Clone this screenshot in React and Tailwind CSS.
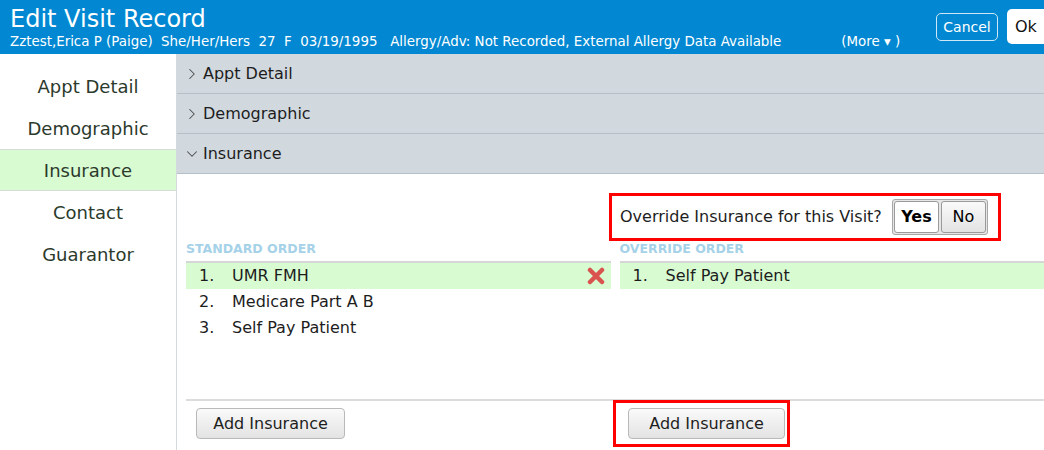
import React, { useState } from 'react';
import { ChevronRight, ChevronDown } from 'lucide-react';

const NAV = ['Appt Detail', 'Demographic', 'Insurance', 'Contact', 'Guarantor'];

const STANDARD = ['UMR FMH', 'Medicare Part A B', 'Self Pay Patient'];
const OVERRIDE = ['Self Pay Patient'];

const RemoveIcon = () => (
  <svg width="18" height="18" viewBox="0 0 18 18">
    <path d="M3 3 L15 15 M15 3 L3 15" stroke="#d9534f" strokeWidth="4.5" strokeLinecap="round" />
  </svg>
);

const SectionHeader = ({ title, open }) => (
  <div className="h-10 flex items-center gap-[2px] pl-[6px] bg-[#d1d9df] border-b border-[#b6c0c8] text-[16px] text-[#1d1d1d]">
    {open
      ? <ChevronDown size={18} color="#4a4a4a" strokeWidth={1.4} />
      : <ChevronRight size={18} color="#4a4a4a" strokeWidth={1.4} />}
    <span>{title}</span>
  </div>
);

const OrderList = ({ label, items, removable }) => (
  <div className="flex-1">
    <div className="text-[12.5px] font-bold text-[#a5d2e8] h-[14px] leading-[14px] mb-[5px]">{label}</div>
    <div className="border-t-2 border-[#d6d6d6]">
      {items.map((name, i) => (
        <div key={name}
          className={`h-[26px] flex items-center text-[16px] text-[#1d1d1d] ${i === 0 ? 'bg-[#d9fbd2]' : ''}`}>
          <span className="w-[46px] pl-[13px]">{i + 1}.</span>
          <span className="flex-1">{name}</span>
          {removable && i === 0 && <span className="mr-[6px] flex"><RemoveIcon /></span>}
        </div>
      ))}
    </div>
  </div>
);

const GreyButton = ({ children, className = '' }) => (
  <button className={`h-[31px] rounded-[4px] border border-[#b9b9b9] bg-gradient-to-b from-[#fafafa] to-[#e3e3e3] text-[16px] text-[#1d1d1d] ${className}`}>
    {children}
  </button>
);

export default function App() {
  const [override, setOverride] = useState(true);

  return (
    <div className="w-[1044px] h-[450px] overflow-hidden bg-white flex flex-col font-['DejaVu_Sans',Verdana,sans-serif]">
      {/* Title bar */}
      <div className="h-[54px] bg-[#0288d2] flex items-start text-white">
        <div className="flex-1 pl-[10px]">
          <div className="text-[24px] leading-[28px] pt-[5px]">Edit Visit Record</div>
          <div className="flex text-[13.4px] leading-[17px] whitespace-pre">
            <span>Zztest,Erica P (Paige)  She/Her/Hers  27  F  03/19/1995   Allergy/Adv: Not Recorded, External Allergy Data Available</span>
            <span className="ml-[60px]">(More ▾ )</span>
          </div>
        </div>
        <div className="flex items-start gap-[9px] pt-[9px]">
          <button className="mt-[4px] h-[28px] w-[62px] rounded-[5px] border border-[#cfe8f7] text-[14px] text-white">Cancel</button>
          <button className="h-[35px] w-[37px] rounded-l-[5px] bg-white text-[16px] text-[#111] pl-[8px] text-left">Ok</button>
        </div>
      </div>

      <div className="flex flex-1 min-h-0">
        {/* Section nav */}
        <div className="w-[177px] border-r border-[#d4d9dd] pt-[11px] text-[18px] text-[#2c3a2c]">
          {NAV.map(item => (
            <div key={item}
              className={`h-[42px] flex items-center justify-center ${item === 'Insurance' ? 'bg-[#d9fbd2] border-y border-[#d4dcd8]' : ''}`}>
              {item}
            </div>
          ))}
        </div>

        {/* Accordion */}
        <div className="flex-1 flex flex-col min-w-0">
          <SectionHeader title="Appt Detail" />
          <SectionHeader title="Demographic" />
          <SectionHeader title="Insurance" open />

          <div className="flex-1 flex flex-col">
            <div className="flex justify-end pt-[19px] pr-[43px]">
              <div className="h-[48px] w-[392px] border-[3px] border-[#f00] flex items-center justify-between pl-[8px] pr-[10px]">
                <span className="text-[16px] text-[#1d1d1d]">Override Insurance for this Visit?</span>
                <div className="flex border border-[#a8a8a8] rounded-[3px] p-[1px] bg-[#e6e6e6] gap-[2px]">
                  <button onClick={() => setOverride(true)}
                    className={`h-[32px] w-[45px] rounded-[3px] border border-[#9a9a9a] text-[16px] ${override ? 'bg-white font-bold' : 'bg-gradient-to-b from-[#fafafa] to-[#e3e3e3]'}`}>Yes</button>
                  <button onClick={() => setOverride(false)}
                    className={`h-[32px] w-[45px] rounded-[3px] border border-[#9a9a9a] text-[16px] ${!override ? 'bg-white font-bold' : 'bg-gradient-to-b from-[#fafafa] to-[#e3e3e3]'}`}>No</button>
                </div>
              </div>
            </div>

            <div className="flex gap-[9px] pl-[9px] mt-[1px] h-[157px]">
              <OrderList label="STANDARD ORDER" items={STANDARD} removable />
              <OrderList label="OVERRIDE ORDER" items={OVERRIDE} />
            </div>

            <div className="ml-[9px] border-t-2 border-[#dcdcdc] flex items-start">
              <div className="w-[427px] pl-[10px] pt-[7px]">
                <GreyButton className="w-[149px]">Add Insurance</GreyButton>
              </div>
              <div className="border-[3px] border-[#f00] pl-[12px] pr-[2px] pt-[5px] pb-[5px] -mt-[1px]">
                <GreyButton className="w-[157px]">Add Insurance</GreyButton>
              </div>
            </div>
          </div>
        </div>
      </div>
    </div>
  );
}
